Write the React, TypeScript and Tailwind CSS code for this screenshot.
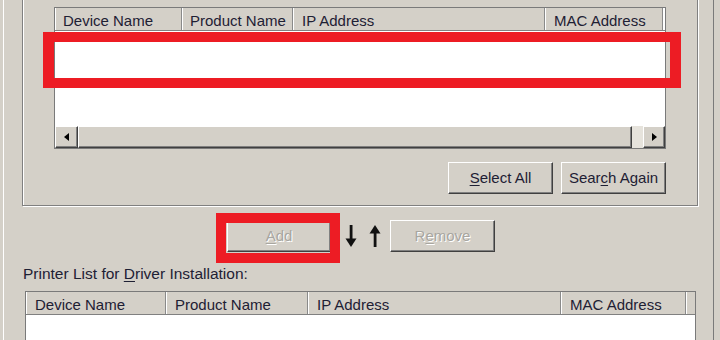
import React from "react";

const raised =
  "bg-[#d4d0c8] border border-t-white border-l-white border-r-[#404040] border-b-[#404040] shadow-[inset_-1px_-1px_0_#808080]";

function HeaderCell({ w, children, pl = "pl-[8px]" }: { w?: string; children?: React.ReactNode; pl?: string }) {
  return (
    <div
      className={`${w ?? "flex-1"} h-full flex items-center pt-[3px] ${pl} border-r border-r-[#8a8a8a] shadow-[inset_1px_0_0_#ffffff] whitespace-nowrap overflow-hidden`}
    >
      {children}
    </div>
  );
}

function Btn({ w, children, disabled }: { w: string; children: React.ReactNode; disabled?: boolean }) {
  return (
    <div
      className={`${w} h-[32px] ${raised} flex items-center justify-center ${
        disabled ? "text-[#a8a6a0] [text-shadow:1px_1px_0_#ffffff]" : "text-[#1e2034]"
      }`}
    >
      <span>{children}</span>
    </div>
  );
}

function ArrowDown() {
  return (
    <svg width="12" height="24" viewBox="0 0 12 24">
      <rect x="4.7" y="1" width="2.8" height="16" fill="#111" />
      <polygon points="0.5,14.5 11.5,14.5 6,23" fill="#111" />
    </svg>
  );
}

function ArrowUp() {
  return (
    <svg width="12" height="24" viewBox="0 0 12 24">
      <rect x="4.7" y="7" width="2.8" height="16" fill="#111" />
      <polygon points="0.5,9.5 11.5,9.5 6,1" fill="#111" />
    </svg>
  );
}

export default function App() {
  return (
    <div
      className="relative w-[720px] h-[340px] overflow-hidden bg-[#d4d0c8] text-[15px] leading-[18px] text-[#1e2034]"
      style={{ fontFamily: '"Liberation Sans", Arial, sans-serif' }}
    >
      <div className="ml-[3px] mr-[6px] h-full border-l border-l-white border-r border-r-[#7a7a7a] flex flex-col">
        {/* Group box */}
        <div className="-mt-[20px] ml-[18px] w-[676px] border border-[#808080] shadow-[1px_1px_0_0_#ffffff,inset_1px_1px_0_0_#ffffff] pt-[26px] pl-[31px] pb-[11px]">
          <div className="w-[612px] h-[142px] border border-[#7a7a7a] bg-white flex flex-col">
            <div className="h-[23px] flex bg-[#d4d0c8] border-b border-b-[#808080]">
              <HeaderCell w="w-[127px]">Device Name</HeaderCell>
              <HeaderCell w="w-[111px]">Product Name</HeaderCell>
              <HeaderCell w="w-[252px]" pl="pl-[9px]">IP Address</HeaderCell>
              <HeaderCell w="w-[118px]" pl="pl-[9px]">MAC Address</HeaderCell>
              <div className="flex-1 h-full bg-white" />
            </div>
            <div className="h-[95px] bg-white" />
            <div className="h-[22px] flex bg-[#e6e3dc]">
              <div className={`w-[23px] h-full ${raised} flex items-center justify-center`}>
                <svg width="5" height="8" viewBox="0 0 5 8">
                  <polygon points="5,0 5,8 0,4" fill="#000" />
                </svg>
              </div>
              <div className={`w-[554px] h-full ${raised}`} />
              <div className="flex-1" />
              <div className={`w-[22px] h-full ${raised} flex items-center justify-center`}>
                <svg width="5" height="8" viewBox="0 0 5 8">
                  <polygon points="0,0 0,8 5,4" fill="#000" />
                </svg>
              </div>
            </div>
          </div>
          <div className="w-[612px] mt-[13px] flex justify-end gap-[8px]">
            <Btn w="w-[105px]">
              <u className="underline-offset-2">S</u>elect All
            </Btn>
            <Btn w="w-[105px]">
              Sear<u className="underline-offset-2">c</u>h Again
            </Btn>
          </div>
        </div>

        {/* Add / Remove row */}
        <div className="mt-[14px] ml-[223px] flex items-center">
          <Btn w="w-[104px]" disabled>
            <u className="underline-offset-2">A</u>dd
          </Btn>
          <div className="ml-[12px] w-[40px] flex items-center justify-between px-[2px]">
            <ArrowDown />
            <ArrowUp />
          </div>
          <div className="ml-[7px]">
            <Btn w="w-[105px]" disabled>
              R<u className="underline-offset-2">e</u>move
            </Btn>
          </div>
        </div>

        <div className="mt-[13px] ml-[19px] whitespace-nowrap text-[15.5px]">
          Printer List for <u className="underline-offset-2">D</u>river Installation:
        </div>

        <div className="mt-[8px] ml-[21px] w-[671px] h-[80px] border border-[#7a7a7a] border-b-0 bg-white flex flex-col">
          <div className="h-[23px] flex bg-[#d4d0c8] border-b border-b-[#808080]">
            <HeaderCell w="w-[140px]" pl="pl-[9px]">Device Name</HeaderCell>
            <HeaderCell w="w-[142px]" pl="pl-[9px]">Product Name</HeaderCell>
            <HeaderCell w="w-[253px]" pl="pl-[9px]">IP Address</HeaderCell>
            <HeaderCell w="w-[125px]" pl="pl-[9px]">MAC Address</HeaderCell>
            <div className="flex-1 h-full shadow-[inset_1px_0_0_#ffffff]" />
          </div>
          <div className="flex-1 bg-white" />
        </div>
      </div>

      {/* Red annotation boxes */}
      <div className="absolute left-[43px] top-[32px] w-[638px] h-[56px] border-x-[11px] border-y-[10px] border-[#ed1c24]" />
      <div className="absolute left-[216px] top-[213px] w-[124px] h-[50px] border-[10px] border-[#ed1c24]" />
    </div>
  );
}
